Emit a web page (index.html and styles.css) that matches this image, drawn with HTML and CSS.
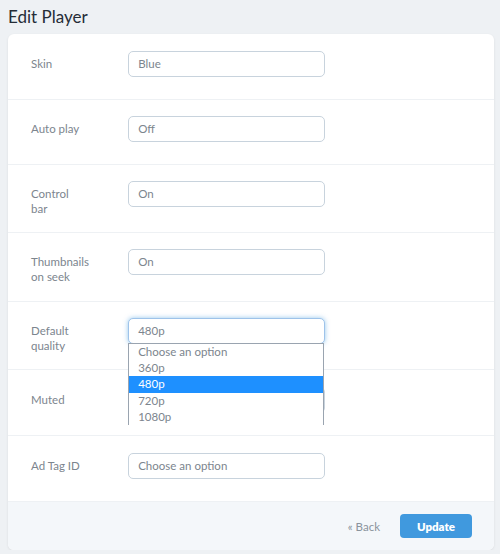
FILE: index.html
```html
<!DOCTYPE html>
<html>
<head>
<meta charset="utf-8">
<link rel="stylesheet" href="styles.css">
</head>
<body>
<h1 class="title">Edit Player</h1>
<div class="card">
  <div class="row">
    <div class="label">Skin</div>
    <div class="field"><div class="select">Blue</div><div class="help"></div></div>
  </div>
  <div class="row">
    <div class="label">Auto play</div>
    <div class="field"><div class="select">Off</div><div class="help"></div></div>
  </div>
  <div class="row">
    <div class="label">Control<br>bar</div>
    <div class="field"><div class="select">On</div><div class="help"></div></div>
  </div>
  <div class="row">
    <div class="label">Thumbnails<br>on seek</div>
    <div class="field"><div class="select">On</div><div class="help"></div></div>
  </div>
  <div class="row">
    <div class="label">Default<br>quality</div>
    <div class="field">
      <div class="select-wrap">
        <div class="select focused">480p</div>
        <ul class="options">
          <li>Choose an option</li>
          <li>360p</li>
          <li class="active">480p</li>
          <li>720p</li>
          <li>1080p</li>
        </ul>
      </div>
      <div class="help"></div>
    </div>
  </div>
  <div class="row late">
    <div class="label">Muted</div>
    <div class="field"><div class="select"></div><div class="help"></div></div>
  </div>
  <div class="row late">
    <div class="label">Ad Tag ID</div>
    <div class="field"><div class="select">Choose an option</div><div class="help"></div></div>
  </div>
  <div class="footer">
    <a class="back">« Back</a>
    <button class="update">Update</button>
  </div>
</div>
</body>
</html>
```

FILE: styles.css
```css
html, body {
  margin: 0;
  padding: 0;
  background: #eef1f4;
}
body {
  padding: 0 6px 0 8px;
  font-family: Lato, "Open Sans", sans-serif;
  font-size: 11.5px;
  color: #7c858e;
}
.title {
  margin: 0;
  height: 34px;
  padding-top: 5px;
  box-sizing: border-box;
  font-size: 17px;
  font-weight: 400;
  color: #252d37;
  line-height: 24px;
}
.card {
  background: #fff;
  border-radius: 6px;
  box-shadow: 0 1px 3px rgba(0,0,0,0.08);
}
.row {
  display: flex;
  border-bottom: 1px solid #eef1f4;
}
.row:first-child .field {
  padding-top: 17px;
}
.label {
  width: 20%;
  box-sizing: border-box;
  padding: 22px 23px 16px 23px;
  line-height: 14.7px;
}
.row:first-child .label {
  padding-top: 23px;
}
.field {
  width: 50%;
  box-sizing: border-box;
  padding: 16px 23px 16px 23px;
}
.row.late .field {
  padding-top: 16.5px;
  padding-bottom: 16.5px;
}
.row.late .label {
  padding-top: 22.5px;
}
.select {
  height: 26px;
  box-sizing: border-box;
  border: 1px solid #c8d3dd;
  border-radius: 5px;
  padding: 0 9px;
  line-height: 24px;
  color: #7c858e;
  background: #fff;
}
.help {
  height: 6px;
}
.select-wrap {
  position: relative;
}
.select.focused {
  border-color: #9ec3ea;
  box-shadow: 0 0 5px rgba(64,153,222,0.55);
}
.options {
  position: absolute;
  left: 0;
  right: 1px;
  top: 25px;
  margin: 0;
  padding: 0;
  list-style: none;
  background: #fff;
  border: 1px solid #9aa4b0;
  border-bottom: none;
  z-index: 5;
  font-size: 11.5px;
}
.options li {
  height: 16.3px;
  line-height: 16px;
  padding: 0 9px;
  color: #7c858e;
}
.options li.active {
  background: #1e90ff;
  color: #fff;
}
.footer {
  display: flex;
  justify-content: flex-end;
  align-items: center;
  gap: 20px;
  background: #f4f7fa;
  padding: 12px 22px 12px 0;
  border-radius: 0 0 6px 6px;
}
.back {
  color: #8a939c;
  font-size: 11.5px;
}
.update {
  width: 72px;
  height: 24px;
  border: none;
  border-radius: 4px;
  background: #4099de;
  color: #fff;
  font-family: Lato, "Open Sans", sans-serif;
  font-weight: 800;
  font-size: 11.5px;
  padding: 0;
}
```
